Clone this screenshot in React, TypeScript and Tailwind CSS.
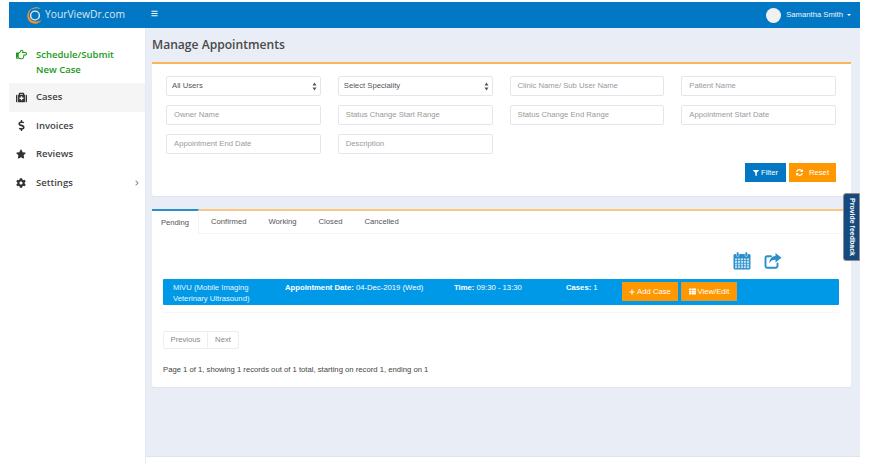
import { FaRegHandPointRight, FaMedkit, FaDollarSign, FaStar, FaCog, FaFilter, FaSyncAlt, FaPlus, FaThList, FaBars, FaChevronRight } from "react-icons/fa";

function Field({ text, select }: { text: string; select?: boolean }) {
  return (
    <div className={`h-[20px] border border-[#e3e6ee] rounded-[2px] bg-white flex items-center justify-between text-[7.7px] ${select ? "pl-[5px] pr-[3px] text-[#555]" : "pl-[7px] text-[#9a9a9a]"}`}>
      <span>{text}</span>
      {select && (
        <svg width="5" height="9" viewBox="0 0 5 9" fill="#555"><path d="M2.5 0.5 L4.5 3.5 H0.5Z M2.5 8.5 L4.5 5.5 H0.5Z" /></svg>
      )}
    </div>
  );
}

function NavItem({ icon, label, active, chevron }: { icon: React.ReactNode; label: string; active?: boolean; chevron?: boolean }) {
  return (
    <div className={`h-[28.5px] flex items-center text-[9.5px] font-semibold text-[#444] ${active ? "bg-[#f5f5f5]" : ""}`}>
      <span className="w-[27px] pl-[7px] text-[#333] flex items-center">{icon}</span>
      <span className="flex-1">{label}</span>
      {chevron && <FaChevronRight className="mr-[5px] text-[#888]" size={6} />}
    </div>
  );
}

function Logo() {
  return (
    <svg width="19" height="19" viewBox="0 0 19 19" fill="none">
      <circle cx="10" cy="9.5" r="4.4" stroke="#e8edf2" strokeWidth="1.4" />
      <path d="M4 15 C7.5 19 14.5 18.5 17 13.5 C14.5 16 8.5 16.5 5.5 13 C3.2 10 3.8 4.8 7.5 2.2 C3 3 0.5 10.5 4 15Z" fill="#f0922b" />
      <path d="M7.5 2.2 C10.5 0.6 14 1.2 15.5 3 C12.5 1.9 9.5 2.1 7 3.4Z" fill="#d9a766" />
    </svg>
  );
}

function Calendar() {
  return (
    <svg width="18" height="18" viewBox="0 0 18 18">
      <rect x="0.5" y="2" width="17" height="15.5" rx="1.5" fill="#2a8fc9" />
      <rect x="3.5" y="0" width="2.4" height="4.5" rx="1.1" fill="#2a8fc9" stroke="#fff" strokeWidth="0.5" />
      <rect x="12.1" y="0" width="2.4" height="4.5" rx="1.1" fill="#2a8fc9" stroke="#fff" strokeWidth="0.5" />
      <g fill="#bfe0f3">
        {[6.4, 9, 11.6, 14.2].flatMap((y) =>
          [2, 5, 8, 11, 14].map((x) => <rect key={`${x}-${y}`} x={x} y={y} width="2.2" height="1.9" />)
        )}
      </g>
    </svg>
  );
}

function Share() {
  return (
    <svg width="18" height="18" viewBox="0 0 18 18" fill="none">
      <path d="M13.5 11.5 V14 a1.8 1.8 0 0 1 -1.8 1.8 H3.3 a1.8 1.8 0 0 1 -1.8 -1.8 V6 a1.8 1.8 0 0 1 1.8 -1.8 H7" stroke="#2a8fc9" strokeWidth="1.9" strokeLinecap="round" />
      <path d="M11.5 1 L17.5 5.8 L11.5 10.6 V7.7 C8.5 7.7 6.6 8.6 5.4 11.4 C5.4 6.8 7.8 4 11.5 3.9Z" fill="#2a8fc9" />
    </svg>
  );
}

export default function App() {
  return (
    <div className="relative w-[874px] h-[471px] overflow-hidden bg-white pl-[9px] pt-[2px] pr-[14px] font-['Liberation_Sans',sans-serif] flex flex-col">
      <header className="h-[26px] shrink-0 bg-[#0277c4] flex items-center text-white">
        <div className="w-[136px] pl-[16px] flex items-center gap-[1px]">
          <Logo />
          <span className="text-[10.3px] text-[#dbe7f0] font-['Open_Sans',sans-serif]">YourViewDr.com</span>
        </div>
        <FaBars size={7} className="ml-[6px] -mt-[3px]" />
        <div className="ml-auto flex items-center pr-[9px]">
          <span className="w-[15px] h-[15px] rounded-full bg-[#f1f1f1] mr-[5px]" />
          <span className="text-[7.7px] text-[#eef5fa]">Samantha Smith</span>
          <span className="ml-[4px] border-x-[2.5px] border-x-transparent border-t-[2.5px] border-t-white" />
        </div>
      </header>
      <div className="flex h-[436px] shrink-0">
        <aside className="w-[137px] shrink-0 bg-white pt-[19px] border-r border-[#e6e9f0] font-['Open_Sans',sans-serif]">
          <div className="h-[36px] flex text-[9.5px] leading-[15px] font-semibold text-[#189a18]">
            <span className="w-[27px] pl-[7px] pt-[2px]"><FaRegHandPointRight size={11} /></span>
            <span>Schedule/Submit<br />New Case</span>
          </div>
          <NavItem active icon={<FaMedkit size={11} />} label="Cases" />
          <NavItem icon={<FaDollarSign size={11} />} label="Invoices" />
          <NavItem icon={<FaStar size={10} />} label="Reviews" />
          <NavItem icon={<FaCog size={10} />} label="Settings" chevron />
        </aside>
        <div className="flex-1 flex flex-col">
          <main className="h-[429px] shrink-0 bg-[#e9edf5] border-b border-[#dfe3ec] pl-[6px] pr-[9px]">
            <h1 className="h-[34px] flex items-center text-[12.1px] text-[#4a4a4a] font-semibold font-['Open_Sans',sans-serif]">Manage Appointments</h1>
            <section className="h-[134px] bg-white border-t-2 border-[#fbb45c] rounded-b-[2px] shadow-[0_1px_1px_#dfe3ea] pt-[12px] pl-[14px] pr-[15px]">
              <div className="grid grid-cols-4 gap-x-[17px] gap-y-[9px]">
                <Field select text="All Users" />
                <Field select text="Select Speciality" />
                <Field text="Clinic Name/ Sub User Name" />
                <Field text="Patient Name" />
                <Field text="Owner Name" />
                <Field text="Status Change Start Range" />
                <Field text="Status Change End Range" />
                <Field text="Appointment Start Date" />
                <Field text="Appointment End Date" />
                <Field text="Description" />
              </div>
              <div className="flex justify-end gap-[3px] mt-[9px] text-[7.7px] text-white">
                <button className="w-[41px] h-[19px] bg-[#0277c4] flex items-center justify-center gap-[2px]"><FaFilter size={6} />Filter</button>
                <button className="w-[47px] h-[19px] bg-[#ff9800] flex items-center justify-center gap-[6px]"><FaSyncAlt size={7} />Reset</button>
              </div>
            </section>
            <section className="mt-[13px] h-[178px] bg-white border-t-2 border-[#fbc67f] rounded-b-[2px] shadow-[0_1px_1px_#dfe3ea] relative">
              <div className="h-[23px] flex items-center text-[7.7px] text-[#555] border-b border-[#f5f5f5]">
                <div className="-mt-[2px] w-[47px] h-[25px] border-t-2 border-[#2a8fc9] bg-white flex items-center justify-center border-r border-r-[#f3f3f3] -mb-[1px]">Pending</div>
                <span className="ml-[12px]">Confirmed</span>
                <span className="ml-[22px]">Working</span>
                <span className="ml-[22px]">Closed</span>
                <span className="ml-[22px]">Cancelled</span>
              </div>
              <div className="flex justify-end gap-[13px] pr-[69px] pt-[18px] h-[45px]">
                <Calendar />
                <Share />
              </div>
              <div className="pl-[11px] pr-[12px]">
                <div className="h-[26px] bg-[#0099e8] text-white text-[7.7px] leading-[11px] flex rounded-[1px]">
                  <div className="w-[122px] pl-[10px] pt-[2.5px] text-[#e4f4fd]">MiVU (Mobile Imaging<br />Veterinary Ultrasound)</div>
                  <div className="w-[169px] pt-[2.5px]"><b>Appointment Date:</b> 04-Dec-2019 (Wed)</div>
                  <div className="w-[112px] pt-[2.5px]"><b>Time:</b> 09:30 - 13:30</div>
                  <div className="w-[56px] pt-[2.5px]"><b>Cases:</b> 1</div>
                  <div className="flex gap-[3px] pt-[3px]">
                    <button className="w-[56px] h-[19px] bg-[#ff9800] flex items-center justify-center gap-[2px]"><FaPlus size={6} />Add Case</button>
                    <button className="w-[56px] h-[19px] bg-[#ff9800] border border-[#d99a3a] flex items-center justify-center gap-[2px]"><FaThList size={7} />View/Edit</button>
                  </div>
                </div>
                <div className="mt-[7px] border-t border-[#f7f7f7]" />
                <div className="mt-[18px] flex w-[76px] h-[18px] border border-[#eceef2] rounded-[2px] text-[7.7px] text-[#888] items-center">
                  <span className="w-[44px] h-full flex items-center justify-center border-r border-[#eceef2]">Previous</span>
                  <span className="flex-1 text-center">Next</span>
                </div>
                <p className="mt-[15px] text-[7.7px] leading-[12px] text-[#444]">Page 1 of 1, showing 1 records out of 1 total, starting on record 1, ending on 1</p>
              </div>
            </section>
          </main>
        </div>
      </div>
      <div className="absolute left-[843px] top-[193px] w-[17px] h-[68px] bg-[#16497e] border border-[#8f8f8f] rounded-l-[3px] flex items-center justify-center">
        <span className="text-[7px] font-bold text-white [writing-mode:vertical-rl] whitespace-nowrap">Provide feedback</span>
      </div>
    </div>
  );
}
